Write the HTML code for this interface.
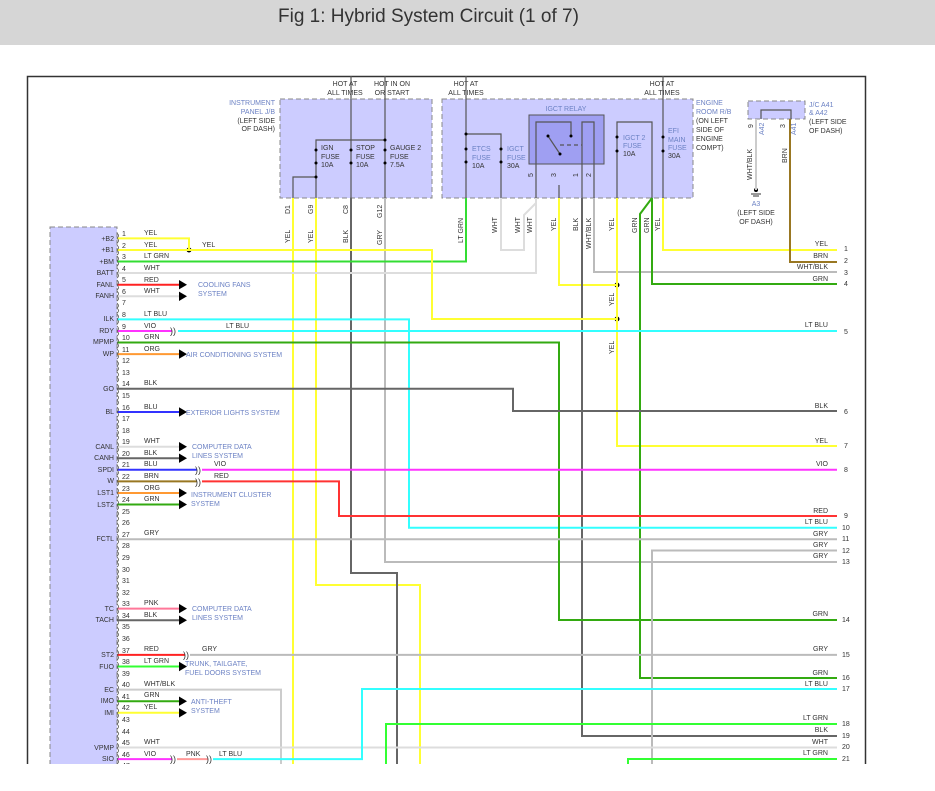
<!DOCTYPE html>
<html><head><meta charset="utf-8"><style>
html,body{margin:0;padding:0;background:#fff;}
body{width:935px;height:791px;overflow:hidden;position:relative;font-family:"Liberation Sans",sans-serif;}
.hdr{position:absolute;left:0;top:0;width:935px;height:45px;background:#d6d6d6;}
.hdr span{position:absolute;left:278px;top:6px;font-size:19px;color:#333;}
svg{position:absolute;left:0;top:0;}
text{font-family:"Liberation Sans",sans-serif;font-size:7px;fill:#333;}
.b{fill:#6c82c4;}
.r{text-anchor:end;}
.m{text-anchor:middle;}
</style></head><body>
<div class="hdr"><span>Fig 1: Hybrid System Circuit (1 of 7)</span></div>
<svg width="935" height="791" viewBox="0 0 935 791">
<rect x="27.5" y="76.5" width="838" height="720" fill="none" stroke="#333" stroke-width="1.5"/>
<!-- boxes -->
<rect x="280" y="99" width="152" height="99" fill="#ccccff" stroke="#888" stroke-dasharray="5,3"/>
<rect x="442" y="99" width="251" height="99" fill="#ccccff" stroke="#888" stroke-dasharray="5,3"/>
<rect x="529" y="115" width="75" height="49" fill="#9f9ff2" stroke="#555"/>
<rect x="748" y="101" width="57" height="18" fill="#ccccff" stroke="#888" stroke-dasharray="5,3"/>
<rect x="50" y="227" width="67" height="570" fill="#ccccff" stroke="#888" stroke-dasharray="5,3"/>
<!-- box labels -->
<g class="r"><text x="275" y="105" class="b r">INSTRUMENT</text><text x="275" y="114" class="b r">PANEL J/B</text><text x="275" y="123" class="r">(LEFT SIDE</text><text x="275" y="131" class="r">OF DASH)</text></g>
<text x="345" y="86" class="m">HOT AT</text><text x="345" y="95" class="m">ALL TIMES</text>
<text x="392" y="86" class="m">HOT IN ON</text><text x="392" y="95" class="m">OR START</text>
<text x="466" y="86" class="m">HOT AT</text><text x="466" y="95" class="m">ALL TIMES</text>
<text x="662" y="86" class="m">HOT AT</text><text x="662" y="95" class="m">ALL TIMES</text>
<text x="696" y="105" class="b">ENGINE</text><text x="696" y="114" class="b">ROOM R/B</text><text x="696" y="123">(ON LEFT</text><text x="696" y="132">SIDE OF</text><text x="696" y="141">ENGINE</text><text x="696" y="150">COMPT)</text>
<text x="809" y="107" class="b">J/C A41</text><text x="809" y="115" class="b">&amp; A42</text><text x="809" y="124">(LEFT SIDE</text><text x="809" y="133">OF DASH)</text>
<text x="566" y="111" class="m b">IGCT RELAY</text>
<g stroke="#555" stroke-width="1.2" fill="none">
<line x1="351" y1="76" x2="351" y2="198"/><line x1="385" y1="76" x2="385" y2="198"/>
<polyline points="316,198 316,140 385,140"/><polyline points="316,177 293,177 293,198"/>
<line x1="466" y1="76" x2="466" y2="198"/><polyline points="466,134 501,134 501,198"/>
<line x1="663" y1="76" x2="663" y2="198"/>
<polyline points="617,198 617,122 652,122 652,198"/>
<polyline points="536,198 536,122 571,122 571,135"/>
<polyline points="559,198 559,185"/><line x1="548" y1="136" x2="560" y2="154"/>
<line x1="560" y1="145" x2="582" y2="145" stroke-dasharray="4,3"/>
<polyline points="582,198 582,122 594,122 594,198"/>
<polyline points="761,119 761,110 791,110 791,119"/>
</g>
<g fill="#000"><circle cx="316" cy="150" r="1.5"/><circle cx="316" cy="163" r="1.5"/><circle cx="351" cy="150" r="1.5"/><circle cx="351" cy="163" r="1.5"/><circle cx="385" cy="150" r="1.5"/><circle cx="385" cy="163" r="1.5"/><circle cx="385" cy="140" r="1.5"/><circle cx="316" cy="177" r="1.5"/>
<circle cx="466" cy="134" r="1.5"/><circle cx="466" cy="149" r="1.5"/><circle cx="466" cy="162" r="1.5"/><circle cx="501" cy="149" r="1.5"/><circle cx="501" cy="162" r="1.5"/>
<circle cx="617" cy="137" r="1.5"/><circle cx="617" cy="151" r="1.5"/><circle cx="663" cy="137" r="1.5"/><circle cx="663" cy="151" r="1.5"/>
<circle cx="548" cy="136" r="1.5"/><circle cx="560" cy="154" r="1.5"/><circle cx="571" cy="136" r="1.5"/>
<circle cx="189" cy="250" r="2.5"/><circle cx="617" cy="285" r="2.5"/><circle cx="617" cy="319" r="2.5"/><circle cx="756" cy="190" r="2"/></g>
<text x="321" y="150">IGN</text><text x="321" y="159">FUSE</text><text x="321" y="167">10A</text>
<text x="356" y="150">STOP</text><text x="356" y="159">FUSE</text><text x="356" y="167">10A</text>
<text x="390" y="150">GAUGE 2</text><text x="390" y="159">FUSE</text><text x="390" y="167">7.5A</text>
<text x="472" y="151" class="b">ETCS</text><text x="472" y="160" class="b">FUSE</text><text x="472" y="168">10A</text>
<text x="507" y="151" class="b">IGCT</text><text x="507" y="160" class="b">FUSE</text><text x="507" y="168">30A</text>
<text x="623" y="140" class="b">IGCT 2</text><text x="623" y="148" class="b">FUSE</text><text x="623" y="156">10A</text>
<text x="668" y="133" class="b">EFI</text><text x="668" y="142" class="b">MAIN</text><text x="668" y="150" class="b">FUSE</text><text x="668" y="158">30A</text>
<text x="756" y="206" class="m b">A3</text><text x="756" y="215" class="m">(LEFT SIDE</text><text x="756" y="224" class="m">OF DASH)</text>
<line x1="751" y1="194" x2="761" y2="194" stroke="#333"/><line x1="753" y1="196" x2="759" y2="196" stroke="#333"/>
<g>
<text transform="translate(290,214) rotate(-90)">D1</text><text transform="translate(313,214) rotate(-90)">G9</text><text transform="translate(348,214) rotate(-90)">C8</text><text transform="translate(382,218) rotate(-90)">G12</text>
<text transform="translate(290,243) rotate(-90)">YEL</text><text transform="translate(313,243) rotate(-90)">YEL</text><text transform="translate(348,243) rotate(-90)">BLK</text><text transform="translate(382,245) rotate(-90)">GRY</text>
<text transform="translate(463,243) rotate(-90)">LT GRN</text><text transform="translate(497,233) rotate(-90)">WHT</text><text transform="translate(520,233) rotate(-90)">WHT</text><text transform="translate(532,233) rotate(-90)">WHT</text>
<text transform="translate(556,231) rotate(-90)">YEL</text><text transform="translate(578,231) rotate(-90)">BLK</text><text transform="translate(591,249) rotate(-90)">WHT/BLK</text><text transform="translate(614,231) rotate(-90)">YEL</text>
<text transform="translate(637,233) rotate(-90)">GRN</text><text transform="translate(649,233) rotate(-90)">GRN</text><text transform="translate(660,231) rotate(-90)">YEL</text>
<text transform="translate(614,306) rotate(-90)">YEL</text><text transform="translate(614,354) rotate(-90)">YEL</text>
<text transform="translate(752,180) rotate(-90)">WHT/BLK</text><text transform="translate(787,163) rotate(-90)">BRN</text>
<text transform="translate(533,177) rotate(-90)">5</text><text transform="translate(556,177) rotate(-90)">3</text><text transform="translate(578,177) rotate(-90)">1</text><text transform="translate(591,177) rotate(-90)">2</text>
<text transform="translate(753,128) rotate(-90)">9</text><text transform="translate(764,135) rotate(-90)" class="b">A42</text><text transform="translate(785,128) rotate(-90)">3</text><text transform="translate(796,135) rotate(-90)" class="b">A41</text>
</g>
<g fill="none" stroke-width="2">
<polyline stroke="#ffff33" points="293,198 293,791"/>
<polyline stroke="#ffff33" points="316,198 316,585 420,585 420,791"/>
<polyline stroke="#666" points="351,198 351,573 397,573 397,791"/>
<polyline stroke="#bbb" points="385,198 385,562 837,562"/>
<polyline stroke="#33dd33" points="466,198 466,261.5 117,261.5"/>
<polyline stroke="#ddd" points="501,198 501,250 524,250 524,215 536,203"/>
<polyline stroke="#ddd" points="536,198 536,273 117,273"/>
<polyline stroke="#ffff33" points="559,198 559,285 617,285"/>
<polyline stroke="#666" points="582,198 582,736 837,736"/>
<polyline stroke="#bbb" points="594,198 594,272 837,272"/>
<polyline stroke="#ffff33" points="617,198 617,446 837,446"/>
<polyline stroke="#33aa11" points="652,198 652,284 837,284"/>
<polyline stroke="#33aa11" points="652,198 640,214 640,678 837,678"/>
<polyline stroke="#ffff33" points="663,198 663,250 837,250"/>
<polyline stroke="#ccc" points="756,119 756,190"/>
<polyline stroke="#997722" points="790,119 790,262 837,262"/>
<polyline stroke="#ffff33" points="117,238.4 189,238.4 189,250"/>
<polyline stroke="#ffff33" points="117,250 432,250 432,319 617,319"/>
<line stroke="#ff2222" x1="117" y1="284.7" x2="180" y2="284.7"/>
<line stroke="#ddd" x1="117" y1="296.3" x2="180" y2="296.3"/>
<polyline stroke="#33ffff" points="117,319.4 409,319.4 409,527.7 837,527.7"/>
<line stroke="#ff33ff" x1="117" y1="331" x2="172" y2="331"/>
<line stroke="#33ffff" x1="178" y1="331" x2="837" y2="331"/>
<polyline stroke="#33aa11" points="117,342.5 559,342.5 559,620 837,620"/>
<line stroke="#ff9933" x1="117" y1="354.1" x2="180" y2="354.1"/>
<polyline stroke="#666" points="117,388.8 513,388.8 513,411 837,411"/>
<line stroke="#3333ff" x1="117" y1="412" x2="180" y2="412"/>
<line stroke="#ddd" x1="117" y1="446.7" x2="180" y2="446.7"/>
<line stroke="#666" x1="117" y1="458.2" x2="180" y2="458.2"/>
<line stroke="#3333ff" x1="117" y1="469.8" x2="197" y2="469.8"/>
<line stroke="#ff33ff" x1="202" y1="469.8" x2="837" y2="469.8"/>
<line stroke="#997722" x1="117" y1="481.4" x2="197" y2="481.4"/>
<polyline stroke="#ff3333" points="202,481.4 339,481.4 339,516 837,516"/>
<line stroke="#ff9933" x1="117" y1="493" x2="180" y2="493"/>
<line stroke="#33aa11" x1="117" y1="504.5" x2="180" y2="504.5"/>
<line stroke="#bbb" x1="117" y1="539.2" x2="837" y2="539.2"/>
<polyline stroke="#bbb" points="652,791 652,550.5 837,550.5"/>
<line stroke="#ff7799" x1="117" y1="608.6" x2="180" y2="608.6"/>
<line stroke="#666" x1="117" y1="620.2" x2="180" y2="620.2"/>
<line stroke="#ff2222" x1="117" y1="654.9" x2="185" y2="654.9"/>
<line stroke="#bbb" x1="190" y1="654.9" x2="837" y2="654.9"/>
<line stroke="#33ff33" x1="117" y1="666.5" x2="180" y2="666.5"/>
<polyline stroke="#ccc" points="117,689.6 281,689.6 281,791"/>
<line stroke="#33aa11" x1="117" y1="701.2" x2="180" y2="701.2"/>
<line stroke="#ffff33" x1="117" y1="712.8" x2="180" y2="712.8"/>
<line stroke="#ddd" x1="117" y1="747.5" x2="837" y2="747.5"/>
<line stroke="#ff33ff" x1="117" y1="759.1" x2="172" y2="759.1"/>
<line stroke="#ff9999" x1="177" y1="759.1" x2="208" y2="759.1"/>
<polyline stroke="#33ffff" points="213,759.1 362,759.1 362,689 837,689"/>
<polyline stroke="#33ff33" points="386,791 386,724 837,724"/>
<polyline stroke="#33ff33" points="628,791 628,759 837,759"/>
</g>
<g fill="#000">
<polygon points="179,280 187,284.7 179,289.4"/><polygon points="179,291.6 187,296.3 179,301"/>
<polygon points="179,349.4 187,354.1 179,358.8"/><polygon points="179,407.3 187,412 179,416.7"/>
<polygon points="179,442 187,446.7 179,451.4"/><polygon points="179,453.5 187,458.2 179,462.9"/>
<polygon points="179,488.3 187,493 179,497.7"/><polygon points="179,499.8 187,504.5 179,509.2"/>
<polygon points="179,603.9 187,608.6 179,613.3"/><polygon points="179,615.5 187,620.2 179,624.9"/>
<polygon points="179,661.8 187,666.5 179,671.2"/><polygon points="179,696.5 187,701.2 179,705.9"/>
<polygon points="179,708.1 187,712.8 179,717.5"/>
</g>
<g>
<text x="170" y="334" style="font-size:9px">))</text><text x="195" y="473" style="font-size:9px">))</text><text x="195" y="485" style="font-size:9px">))</text>
<text x="183" y="658" style="font-size:9px">))</text><text x="170" y="762" style="font-size:9px">))</text><text x="206" y="762" style="font-size:9px">))</text>
</g>
<g>
<text x="198" y="287" class="b">COOLING FANS</text><text x="198" y="296" class="b">SYSTEM</text>
<text x="186" y="357" class="b">AIR CONDITIONING SYSTEM</text>
<text x="186" y="415" class="b">EXTERIOR LIGHTS SYSTEM</text>
<text x="192" y="449" class="b">COMPUTER DATA</text><text x="192" y="458" class="b">LINES SYSTEM</text>
<text x="191" y="497" class="b">INSTRUMENT CLUSTER</text><text x="191" y="506" class="b">SYSTEM</text>
<text x="192" y="611" class="b">COMPUTER DATA</text><text x="192" y="620" class="b">LINES SYSTEM</text>
<text x="185" y="666" class="b">TRUNK, TAILGATE,</text><text x="185" y="675" class="b">FUEL DOORS SYSTEM</text>
<text x="191" y="704" class="b">ANTI-THEFT</text><text x="191" y="713" class="b">SYSTEM</text>
</g>
<g>
<text x="114" y="241" class="r">+B2</text><text x="114" y="252" class="r">+B1</text><text x="114" y="264" class="r">+BM</text><text x="114" y="275" class="r">BATT</text><text x="114" y="287" class="r">FANL</text><text x="114" y="298" class="r">FANH</text>
<text x="114" y="321" class="r">ILK</text><text x="114" y="333" class="r">RDY</text><text x="114" y="344" class="r">MPMP</text><text x="114" y="356" class="r">WP</text><text x="114" y="391" class="r">GO</text><text x="114" y="414" class="r">BL</text>
<text x="114" y="449" class="r">CANL</text><text x="114" y="460" class="r">CANH</text><text x="114" y="472" class="r">SPDI</text><text x="114" y="483" class="r">W</text><text x="114" y="495" class="r">LST1</text><text x="114" y="507" class="r">LST2</text>
<text x="114" y="541" class="r">FCTL</text><text x="114" y="611" class="r">TC</text><text x="114" y="622" class="r">TACH</text><text x="114" y="657" class="r">ST2</text><text x="114" y="669" class="r">FUO</text>
<text x="114" y="692" class="r">EC</text><text x="114" y="703" class="r">IMO</text><text x="114" y="715" class="r">IMI</text><text x="114" y="750" class="r">VPMP</text><text x="114" y="761" class="r">SIO</text>
</g>
<g>
<text x="122" y="236">1</text><text x="122" y="248">2</text><text x="122" y="259">3</text><text x="122" y="271">4</text><text x="122" y="282">5</text><text x="122" y="294">6</text><text x="122" y="305">7</text><text x="122" y="317">8</text><text x="122" y="329">9</text><text x="122" y="340">10</text>
<text x="122" y="352">11</text><text x="122" y="363">12</text><text x="122" y="375">13</text><text x="122" y="386">14</text><text x="122" y="398">15</text><text x="122" y="410">16</text><text x="122" y="421">17</text><text x="122" y="433">18</text><text x="122" y="444">19</text><text x="122" y="456">20</text>
<text x="122" y="467">21</text><text x="122" y="479">22</text><text x="122" y="491">23</text><text x="122" y="502">24</text><text x="122" y="514">25</text><text x="122" y="525">26</text><text x="122" y="537">27</text><text x="122" y="548">28</text><text x="122" y="560">29</text><text x="122" y="572">30</text>
<text x="122" y="583">31</text><text x="122" y="595">32</text><text x="122" y="606">33</text><text x="122" y="618">34</text><text x="122" y="629">35</text><text x="122" y="641">36</text><text x="122" y="653">37</text><text x="122" y="664">38</text><text x="122" y="676">39</text><text x="122" y="687">40</text>
<text x="122" y="699">41</text><text x="122" y="710">42</text><text x="122" y="722">43</text><text x="122" y="734">44</text><text x="122" y="745">45</text><text x="122" y="757">46</text><text x="122" y="768">47</text>
</g>
<path fill="none" stroke="#555" stroke-width="0.8" d="M117,233 q3,3 0,5 q3,3 0,5 M117,245 q3,3 0,5 q3,3 0,5 M117,256 q3,3 0,5 q3,3 0,5 M117,268 q3,3 0,5 q3,3 0,5 M117,280 q3,3 0,5 q3,3 0,5 M117,291 q3,3 0,5 q3,3 0,5 M117,303 q3,3 0,5 q3,3 0,5 M117,314 q3,3 0,5 q3,3 0,5 M117,326 q3,3 0,5 q3,3 0,5 M117,338 q3,3 0,5 q3,3 0,5 M117,349 q3,3 0,5 q3,3 0,5 M117,361 q3,3 0,5 q3,3 0,5 M117,372 q3,3 0,5 q3,3 0,5 M117,384 q3,3 0,5 q3,3 0,5 M117,395 q3,3 0,5 q3,3 0,5 M117,407 q3,3 0,5 q3,3 0,5 M117,419 q3,3 0,5 q3,3 0,5 M117,430 q3,3 0,5 q3,3 0,5 M117,442 q3,3 0,5 q3,3 0,5 M117,453 q3,3 0,5 q3,3 0,5 M117,465 q3,3 0,5 q3,3 0,5 M117,476 q3,3 0,5 q3,3 0,5 M117,488 q3,3 0,5 q3,3 0,5 M117,500 q3,3 0,5 q3,3 0,5 M117,511 q3,3 0,5 q3,3 0,5 M117,523 q3,3 0,5 q3,3 0,5 M117,534 q3,3 0,5 q3,3 0,5 M117,546 q3,3 0,5 q3,3 0,5 M117,557 q3,3 0,5 q3,3 0,5 M117,569 q3,3 0,5 q3,3 0,5 M117,581 q3,3 0,5 q3,3 0,5 M117,592 q3,3 0,5 q3,3 0,5 M117,604 q3,3 0,5 q3,3 0,5 M117,615 q3,3 0,5 q3,3 0,5 M117,627 q3,3 0,5 q3,3 0,5 M117,638 q3,3 0,5 q3,3 0,5 M117,650 q3,3 0,5 q3,3 0,5 M117,662 q3,3 0,5 q3,3 0,5 M117,673 q3,3 0,5 q3,3 0,5 M117,685 q3,3 0,5 q3,3 0,5 M117,696 q3,3 0,5 q3,3 0,5 M117,708 q3,3 0,5 q3,3 0,5 M117,719 q3,3 0,5 q3,3 0,5 M117,731 q3,3 0,5 q3,3 0,5 M117,743 q3,3 0,5 q3,3 0,5 M117,754 q3,3 0,5 q3,3 0,5 M117,766 q3,3 0,5 q3,3 0,5"/>
<g>
<text x="144" y="235">YEL</text><text x="144" y="247">YEL</text><text x="202" y="247">YEL</text><text x="144" y="258">LT GRN</text><text x="144" y="270">WHT</text><text x="144" y="282">RED</text><text x="144" y="293">WHT</text>
<text x="144" y="316">LT BLU</text><text x="144" y="328">VIO</text><text x="226" y="328">LT BLU</text><text x="144" y="339">GRN</text><text x="144" y="351">ORG</text><text x="144" y="385">BLK</text><text x="144" y="409">BLU</text>
<text x="144" y="443">WHT</text><text x="144" y="455">BLK</text><text x="144" y="466">BLU</text><text x="214" y="466">VIO</text><text x="144" y="478">BRN</text><text x="214" y="478">RED</text><text x="144" y="490">ORG</text><text x="144" y="501">GRN</text>
<text x="144" y="535">GRY</text><text x="144" y="605">PNK</text><text x="144" y="617">BLK</text><text x="144" y="651">RED</text><text x="202" y="651">GRY</text><text x="144" y="663">LT GRN</text>
<text x="144" y="686">WHT/BLK</text><text x="144" y="697">GRN</text><text x="144" y="709">YEL</text><text x="144" y="744">WHT</text><text x="144" y="756">VIO</text><text x="186" y="756">PNK</text><text x="219" y="756">LT BLU</text>
</g>
<g>
<text x="828" y="246" class="r">YEL</text><text x="828" y="258" class="r">BRN</text><text x="828" y="269" class="r">WHT/BLK</text><text x="828" y="281" class="r">GRN</text><text x="828" y="327" class="r">LT BLU</text>
<text x="828" y="408" class="r">BLK</text><text x="828" y="443" class="r">YEL</text><text x="828" y="466" class="r">VIO</text><text x="828" y="513" class="r">RED</text><text x="828" y="524" class="r">LT BLU</text>
<text x="828" y="536" class="r">GRY</text><text x="828" y="547" class="r">GRY</text><text x="828" y="558" class="r">GRY</text><text x="828" y="616" class="r">GRN</text><text x="828" y="651" class="r">GRY</text>
<text x="828" y="675" class="r">GRN</text><text x="828" y="686" class="r">LT BLU</text><text x="828" y="720" class="r">LT GRN</text><text x="828" y="732" class="r">BLK</text><text x="828" y="744" class="r">WHT</text><text x="828" y="755" class="r">LT GRN</text>
<text x="844" y="251">1</text><text x="844" y="263">2</text><text x="844" y="275">3</text><text x="844" y="286">4</text><text x="844" y="334">5</text><text x="844" y="414">6</text><text x="844" y="448">7</text><text x="844" y="472">8</text><text x="844" y="518">9</text><text x="842" y="530">10</text>
<text x="842" y="541">11</text><text x="842" y="553">12</text><text x="842" y="564">13</text><text x="842" y="622">14</text><text x="842" y="657">15</text><text x="842" y="680">16</text><text x="842" y="691">17</text><text x="842" y="726">18</text><text x="842" y="738">19</text><text x="842" y="749">20</text><text x="842" y="761">21</text>
</g>
<rect x="0" y="764" width="935" height="27" fill="#fff"/>
</svg>
</body></html>
